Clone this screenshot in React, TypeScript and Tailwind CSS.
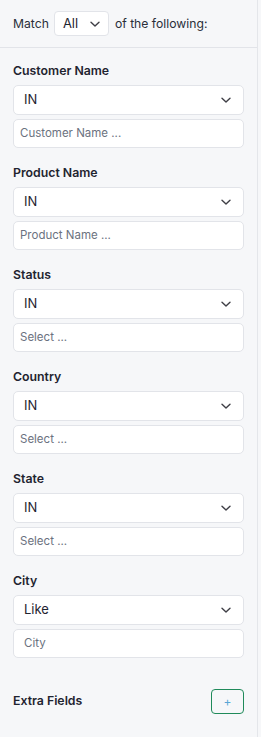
import React from "react";

const Chevron = ({ className = "" }: { className?: string }) => (
  <svg width="12" height="12" viewBox="0 0 12 12" className={className} fill="none">
    <path d="M2 4.2 L6 8 L10 4.2" stroke="#3f3f46" strokeWidth="1.4" strokeLinecap="round" strokeLinejoin="round" />
  </svg>
);

const Field = ({ label, op, placeholder, pl = "pl-[6px]" }: { label: string; op: string; placeholder: string; pl?: string }) => (
  <div className="flex flex-col">
    <div className="text-[12.3px] font-semibold leading-4 text-[#1f2430] h-4">{label}</div>
    <div className="mt-[6px] h-[30px] bg-white border border-[#e2e4e9] rounded-[5px] flex items-center justify-between pl-[10px] pr-[11px] text-[13px] text-[#1f2430]">
      <span>{op}</span>
      <Chevron />
    </div>
    <div className={`mt-[4px] h-[29px] bg-white border border-[#e2e4e9] rounded-[5px] flex items-center ${pl} text-[11.5px] text-[#6b7280]`}>
      {placeholder}
    </div>
  </div>
);

export default function App() {
  const fields = [
    { label: "Customer Name", op: "IN", placeholder: "Customer Name ..." },
    { label: "Product Name", op: "IN", placeholder: "Product Name ..." },
    { label: "Status", op: "IN", placeholder: "Select ..." },
    { label: "Country", op: "IN", placeholder: "Select ..." },
    { label: "State", op: "IN", placeholder: "Select ..." },
  ];
  return (
    <div
      className="w-[261px] h-[737px] bg-[#f6f7f9] flex"
      style={{ fontFamily: "Inter, 'Noto Sans', sans-serif" }}
    >
      <div className="w-[258px] border-r border-[#e4e6ea] flex flex-col">
        <div className="h-[48px] border-b border-[#e2e4e9] flex items-start pt-[11px] pl-[13px] text-[12.2px] text-[#2a2f3a]">
          <span className="leading-[25px]">Match</span>
          <div className="ml-[5px] w-[55px] h-[25px] bg-white border border-[#e2e4e9] rounded-[4px] flex items-center justify-between pl-[8px] pr-[7px] text-[13px] text-[#1f2430]">
            <span>All</span>
            <Chevron />
          </div>
          <span className="ml-[6px] leading-[25px]">of the following:</span>
        </div>
        <div className="px-[13px] pt-[15px] flex flex-col gap-[17px]">
          {fields.map((f) => (
            <Field key={f.label} {...f} />
          ))}
          <Field label="City" op="Like" placeholder="City" pl="pl-[10px]" />
        </div>
        <div className="mt-[31px] px-[13px] flex items-center justify-between">
          <span className="text-[12.3px] font-semibold text-[#1f2430]">Extra Fields</span>
          <button className="w-[33px] h-[25px] border border-[#1f8a5a] rounded-[4px] flex items-center justify-center text-[12px] text-[#5aa6d6] leading-none bg-transparent">
            +
          </button>
        </div>
      </div>
    </div>
  );
}
